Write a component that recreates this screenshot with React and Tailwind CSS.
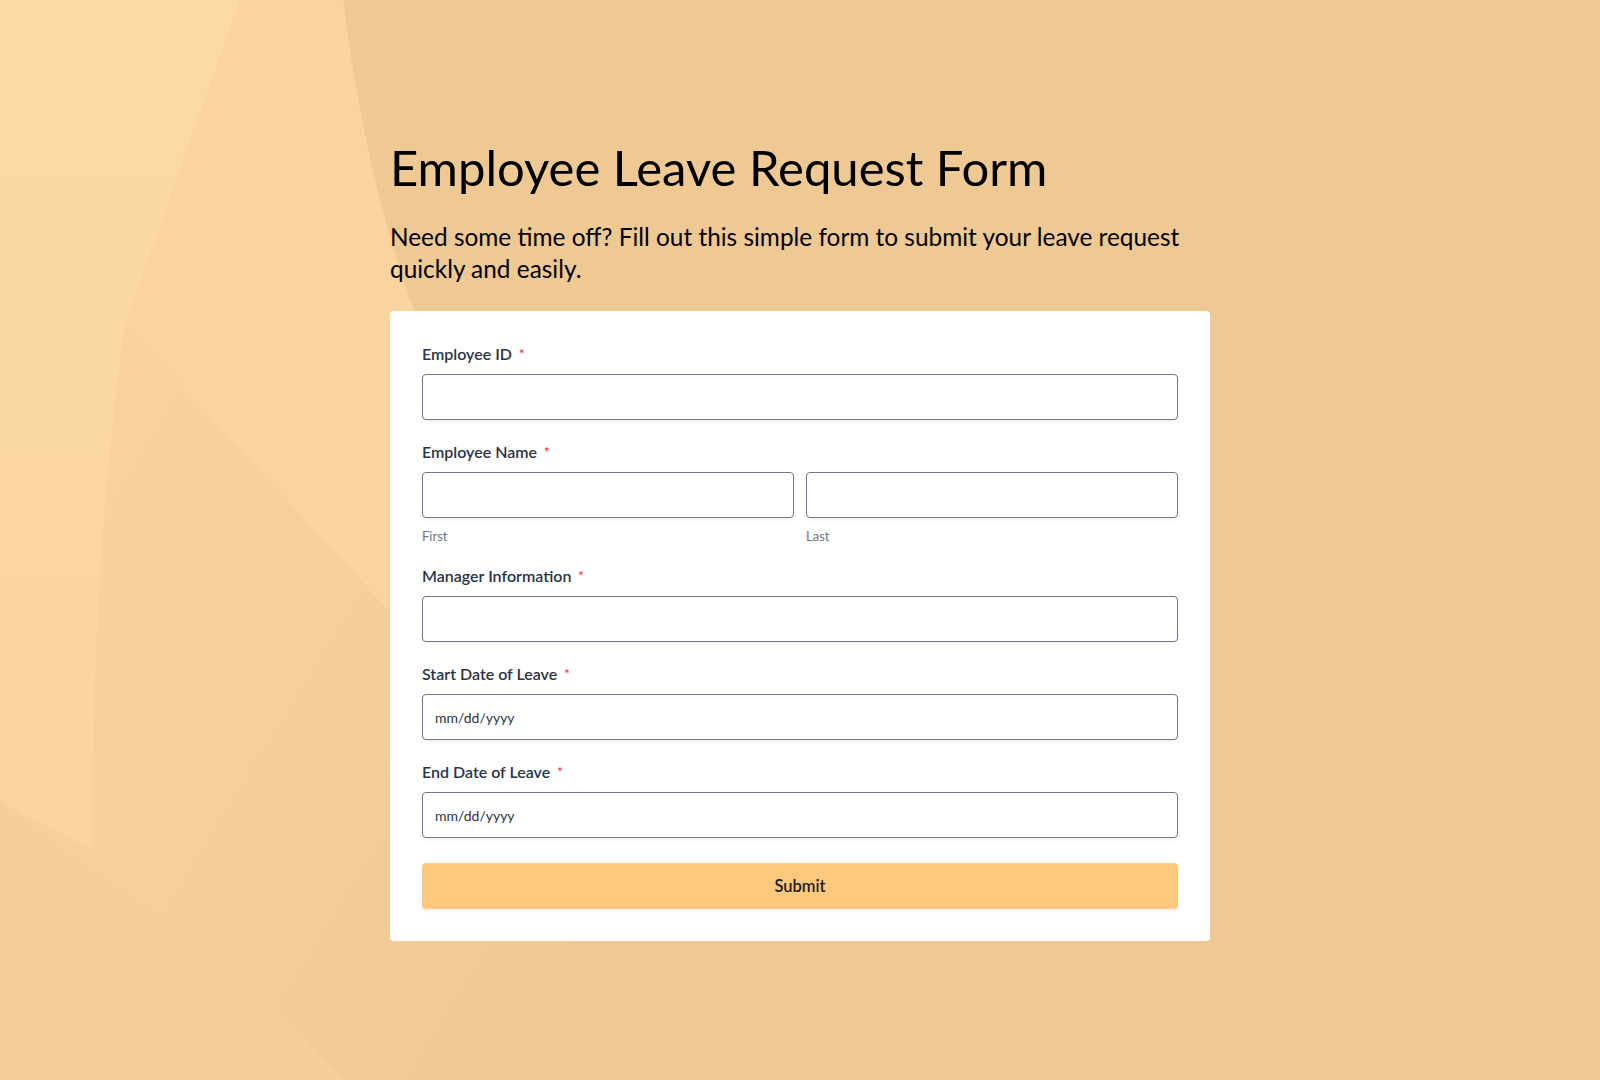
import React from 'react';

const fields = [
  { id: 'employeeId', label: 'Employee ID' },
  { id: 'employeeName', label: 'Employee Name', split: true },
  { id: 'manager', label: 'Manager Information' },
  { id: 'startDate', label: 'Start Date of Leave', date: true },
  { id: 'endDate', label: 'End Date of Leave', date: true },
];

function Backdrop() {
  return (
    <svg className="absolute inset-0 w-full h-full" viewBox="0 0 1600 1080" preserveAspectRatio="none">
      <defs>
        <linearGradient id="leftFade" x1="0" y1="0" x2="0.9" y2="1">
          <stop offset="0" stopColor="#f9d49e" />
          <stop offset="0.55" stopColor="#f6d09b" />
          <stop offset="1" stopColor="#efc994" />
        </linearGradient>
        <linearGradient id="lightFade" x1="0" y1="0" x2="0" y2="1">
          <stop offset="0" stopColor="#fedaa3" />
          <stop offset="1" stopColor="#f9d49f" />
        </linearGradient>
      </defs>
      <rect width="1600" height="1080" fill="#efc994" />
      {/* wide soft band left of the big arc */}
      <path d="M0 0 L343 0 C358 120 382 230 425 340 L600 1080 L0 1080 Z" fill="url(#leftFade)" />
      {/* upper band between the arc and the diagonal */}
      <path d="M240 0 L343 0 C358 120 382 230 425 340 L425 650 L125 324 Z" fill="#f9d49e" />
      {/* lightest top-left wedge */}
      <path d="M0 0 L240 0 L125 324 C100 500 92 680 92 850 L0 801 Z" fill="url(#lightFade)" />
      {/* bottom-left band */}
      <path d="M0 801 L235 969 L345 1080 L0 1080 Z" fill="#f5cf99" />
    </svg>
  );
}

function Field({ field }) {
  const inputCls =
    'w-full h-[46px] rounded-[4px] border border-[#6f7685] bg-white px-3 text-[14px] text-[#2c3345] shadow-[0_2px_3px_rgba(0,0,0,0.06)] outline-none placeholder:text-[#2c3345]';
  return (
    <div className="flex flex-col">
      <label className="mb-[9px] flex items-center text-[16px] leading-[22px] font-semibold text-[#2c3345]">
        {field.label}
        <span className="ml-[7px] text-[13px] leading-[22px] text-[#f23a3c]">*</span>
      </label>
      {field.split ? (
        <div className="grid grid-cols-2 gap-3">
          <div>
            <input className={inputCls} />
            <div className="mt-[10px] text-[13px] leading-4 text-[#6f7685]">First</div>
          </div>
          <div>
            <input className={inputCls} />
            <div className="mt-[10px] text-[13px] leading-4 text-[#6f7685]">Last</div>
          </div>
        </div>
      ) : (
        <input className={inputCls} placeholder={field.date ? 'mm/dd/yyyy' : ''} />
      )}
    </div>
  );
}

export default function App() {
  return (
    <div className="relative min-h-screen w-full overflow-hidden font-['Lato',sans-serif]">
      <Backdrop />
      <div className="relative mx-auto w-[820px] pt-[139px] pb-[138px]">
        {/* Header */}
        <h1 className="text-[49px] leading-[57px] font-normal text-black">Employee Leave Request Form</h1>
        <p className="mt-[25px] text-[24.4px] leading-8 text-black">
          Need some time off? Fill out this simple form to submit your leave request quickly and easily.
        </p>

        {/* Form card */}
        <div className="mt-[26px] rounded-[4px] bg-white px-8 py-8">
          <div className="flex flex-col gap-[21px]">
            {fields.map((f) => (
              <Field key={f.id} field={f} />
            ))}
          </div>
          <button className="mt-[25px] h-[46px] w-full rounded-[4px] bg-[#fec97d] text-[16.5px] font-semibold text-[#1a1a1a] shadow-[0_2px_3px_rgba(0,0,0,0.06)]">
            Submit
          </button>
        </div>
      </div>
    </div>
  );
}
